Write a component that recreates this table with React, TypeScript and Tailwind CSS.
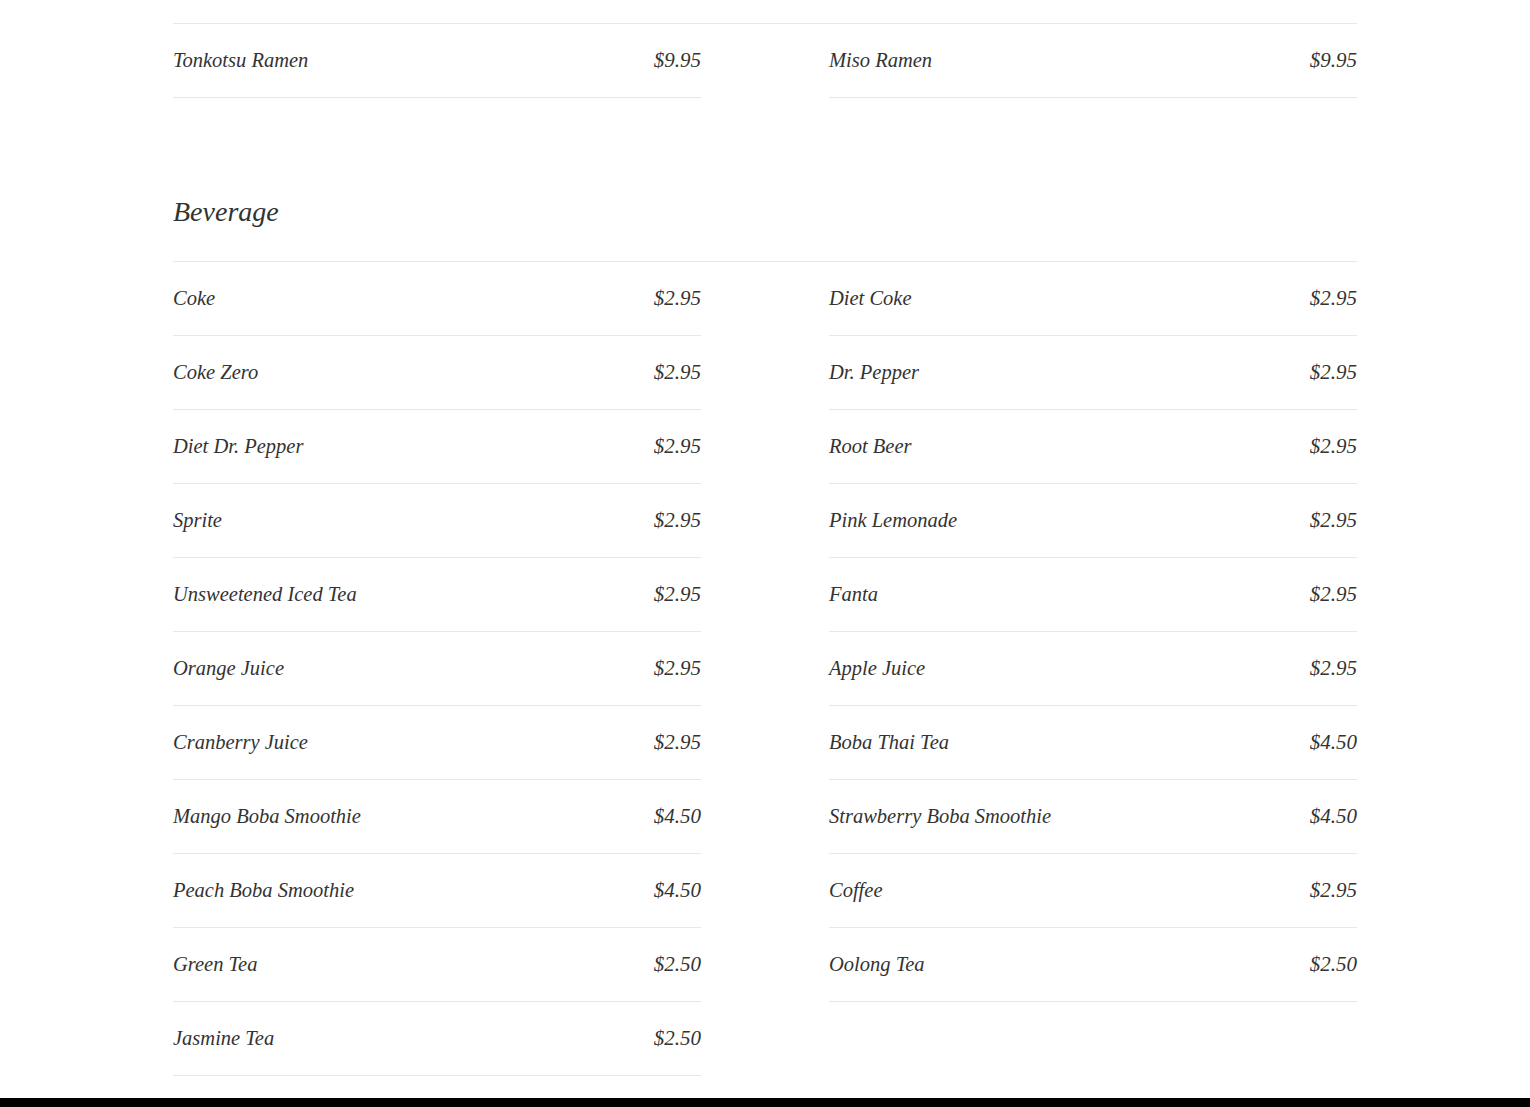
import React from "react";

const ramen: [string, string][] = [
  ["Tonkotsu Ramen", "$9.95"],
  ["Miso Ramen", "$9.95"],
];

const beverages: [string, string][] = [
  ["Coke", "$2.95"],
  ["Diet Coke", "$2.95"],
  ["Coke Zero", "$2.95"],
  ["Dr. Pepper", "$2.95"],
  ["Diet Dr. Pepper", "$2.95"],
  ["Root Beer", "$2.95"],
  ["Sprite", "$2.95"],
  ["Pink Lemonade", "$2.95"],
  ["Unsweetened Iced Tea", "$2.95"],
  ["Fanta", "$2.95"],
  ["Orange Juice", "$2.95"],
  ["Apple Juice", "$2.95"],
  ["Cranberry Juice", "$2.95"],
  ["Boba Thai Tea", "$4.50"],
  ["Mango Boba Smoothie", "$4.50"],
  ["Strawberry Boba Smoothie", "$4.50"],
  ["Peach Boba Smoothie", "$4.50"],
  ["Coffee", "$2.95"],
  ["Green Tea", "$2.50"],
  ["Oolong Tea", "$2.50"],
  ["Jasmine Tea", "$2.50"],
];

function Row({ name, price }: { name: string; price: string }) {
  return (
    <div className="flex h-[74px] items-center justify-between border-b border-[#e8e8e8]">
      <span>{name}</span>
      <span className="text-[21px]">{price}</span>
    </div>
  );
}

export default function App() {
  return (
    <div
      className="min-h-[1107px] bg-white text-[#333333] italic"
      style={{ fontFamily: '"Liberation Serif", "DejaVu Serif", serif' }}
    >
      <div className="mx-auto w-[1184px] text-[20.5px]">
        <div className="h-[24px] border-b border-[#e8e8e8]" />
        <div className="grid grid-cols-2 gap-x-[128px]">
          {ramen.map(([n, p]) => (
            <Row key={n} name={n} price={p} />
          ))}
        </div>
        <div className="flex h-[164px] items-end border-b border-[#e8e8e8] pb-[29px]">
          <h2 className="text-[28px] leading-[40px] font-normal">Beverage</h2>
        </div>
        <div className="grid grid-cols-2 gap-x-[128px]">
          {beverages.map(([n, p]) => (
            <Row key={n} name={n} price={p} />
          ))}
        </div>
        <div className="h-[22px]" />
      </div>
      <div className="h-[40px] bg-black" />
    </div>
  );
}
